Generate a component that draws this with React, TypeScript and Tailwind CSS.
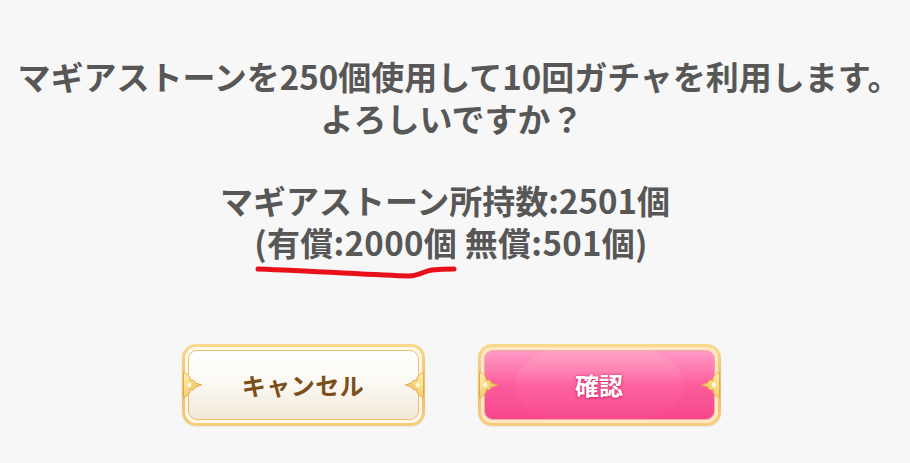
import React from "react";

const font = { fontFamily: '"Noto Sans CJK JP", "Noto Sans", sans-serif' };

function Ornament({ side }: { side: "left" | "right" }) {
  return (
    <svg
      width="26"
      height="34"
      viewBox="0 0 22 30"
      className={
        "absolute top-1/2 -translate-y-1/2 " +
        (side === "left" ? "left-[1px]" : "right-[1px] scale-x-[-1]")
      }
    >
      <defs>
        <linearGradient id={"og" + side} x1="0" y1="0" x2="1" y2="1">
          <stop offset="0" stopColor="#fff3b0" />
          <stop offset="1" stopColor="#e9b44c" />
        </linearGradient>
      </defs>
      <path
        d="M0 4 C4 5 6 8 6 11 C8 10 10 11 10 13 L16 15 L10 17 C10 19 8 20 6 19 C6 22 4 25 0 26 Z"
        fill={"url(#og" + side + ")"}
        stroke="#e2a640"
        strokeWidth="0.8"
      />
      <circle cx="5" cy="15" r="2" fill="#fff8d0" />
    </svg>
  );
}

function CancelButton() {
  return (
    <div className="relative w-[243px] h-[82px] rounded-[14px] p-[3px] bg-gradient-to-b from-[#f9d98e] via-[#efbd66] to-[#f5cd7c] shadow-[0_1px_2px_rgba(0,0,0,0.08)]">
      <div className="w-full h-full rounded-[11px] p-[3px] bg-[#fff8ea]">
        <div className="relative w-full h-full rounded-[9px] border-[1.5px] border-[#ecbd6c] bg-gradient-to-b from-[#ffffff] via-[#fbf8f2] to-[#f1e7d6] flex items-center justify-center">
          <span
            className="text-[24px] font-bold text-[#7a4f1a] tracking-[0.5px]"
            style={font}
          >
            キャンセル
          </span>
        </div>
      </div>
      <Ornament side="left" />
      <Ornament side="right" />
    </div>
  );
}

function ConfirmButton() {
  return (
    <div className="relative w-[243px] h-[82px] rounded-[14px] p-[3px] bg-gradient-to-b from-[#f9d98e] via-[#efbd66] to-[#f5cd7c] shadow-[0_1px_2px_rgba(0,0,0,0.08)]">
      <div className="w-full h-full rounded-[11px] p-[3px] bg-[#ffe6c4]">
        <div className="relative w-full h-full rounded-[9px] border-[1.5px] border-[#f0a8a0] bg-gradient-to-b from-[#ff9ac4] via-[#fb5c9c] to-[#f7468d] flex items-center justify-center overflow-hidden">
          <div className="absolute left-[30px] right-[30px] top-[-10px] bottom-[-10px] rounded-[50%] bg-gradient-to-b from-[#ffb0d0]/60 via-[#ff6fa8]/30 to-transparent" />
          <span
            className="relative text-[24px] font-bold text-white [text-shadow:0_0_3px_#d8326f,0_1px_2px_#c9285f]"
            style={font}
          >
            確認
          </span>
        </div>
      </div>
      <Ornament side="left" />
      <Ornament side="right" />
    </div>
  );
}

export default function App() {
  return (
    <div
      className="w-[910px] h-[463px] bg-[#f7f7f7] flex flex-col items-center overflow-hidden"
      style={font}
    >
      <div className="w-full pt-[55px] flex flex-col items-center text-[33px] leading-[42px] font-bold text-[#575757] whitespace-nowrap">
        <div className="translate-x-[4px]">マギアストーンを250個使用して10回ガチャを利用します。</div>
        <div className="-translate-x-[3px]">よろしいですか？</div>
        <div className="mt-[40px] -translate-x-[10px]">マギアストーン所持数:2501個</div>
        <div className="relative -translate-x-[4px] tracking-[0.3px]">
          (有償:2000個 無償:501個)
          <svg
            className="absolute left-[0px] top-[44px]"
            width="210"
            height="16"
            viewBox="0 0 210 16"
          >
            <path
              d="M4 4 C60 6 120 10 155 11 C165 11 170 6 178 5 C188 4 194 4 200 4"
              fill="none"
              stroke="#e8111a"
              strokeWidth="5"
              strokeLinecap="round"
            />
          </svg>
        </div>
      </div>
      <div className="mt-[81px] pr-[8px] flex gap-[53px]">
        <CancelButton />
        <ConfirmButton />
      </div>
    </div>
  );
}
